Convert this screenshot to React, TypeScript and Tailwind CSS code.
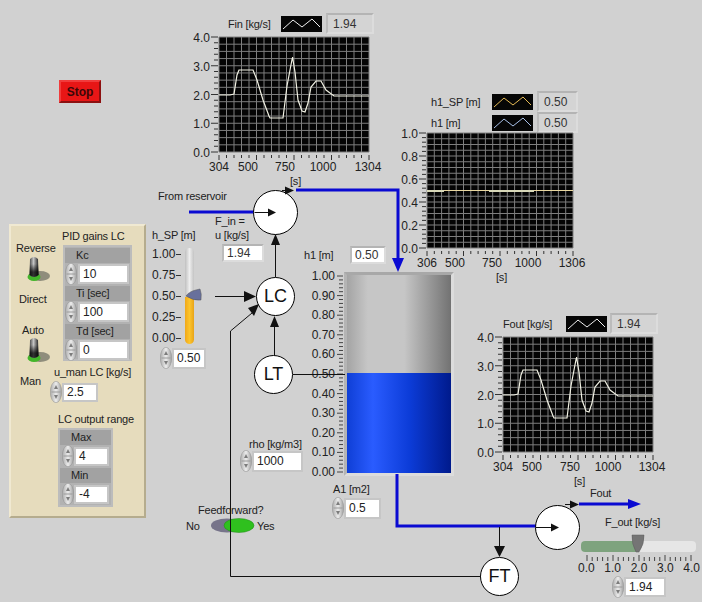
import type { ReactNode } from "react";

const FONT = "'Liberation Sans', Arial, sans-serif";

const CURVE =
  "0,58 11,58 15,57 18,38 20,33 34,33 38,43 44,63 50,79 51,81 64,81 68,49 71,33 73.5,20 76,35 79,63 83,74 86,75 89,66 92,50 97,44 102,44 107,53 115,59 150,59";

type Tick = [string, number];

function Plot({
  width,
  height,
  hCount,
  minorY,
  yLabels,
  xLabels,
  className,
  children,
}: {
  width: number;
  height: number;
  hCount: number;
  minorY: number;
  yLabels: Tick[];
  xLabels: Tick[];
  className: string;
  children: ReactNode;
}) {
  // 28px of axis room on the left, labels may spill over the top edge
  const vLines = Array.from({ length: 21 }, (_, i) => (i * width) / 20);
  const hLines = Array.from({ length: hCount + 1 }, (_, i) => (i * height) / hCount);
  const yTicks = Array.from({ length: minorY + 1 }, (_, i) => (i * height) / minorY);
  return (
    <svg className={`overflow-visible ${className}`} width={width + 50} height={height + 22}>
      <g transform="translate(28,0)">
        <rect width={width} height={height} fill="#040404" />
        {vLines.map((x) => (
          <line key={x} x1={x} x2={x} y1={0} y2={height} stroke="#7e7e7e" />
        ))}
        {hLines.map((y) => (
          <line key={y} x1={0} x2={width} y1={y} y2={y} stroke="#7e7e7e" />
        ))}
        {children}
        {yTicks.map((y, i) => (
          <line key={y} x1={i % 5 === 0 ? -8 : -5} x2={-1} y1={y} y2={y} stroke="#333" />
        ))}
        {vLines.map((x, i) => (
          <line key={x} x1={x} x2={x} y1={height + 3} y2={height + (i % 5 === 0 ? 8 : 6)} stroke="#333" />
        ))}
        {yLabels.map(([t, y]) => (
          <text key={t} x={-9} y={y + 5} textAnchor="end" fontSize="12" fill="#222">
            {t}
          </text>
        ))}
        {xLabels.map(([t, x]) => (
          <text key={t} x={x} y={height + 19} textAnchor="middle" fontSize="12" fill="#222">
            {t}
          </text>
        ))}
      </g>
    </svg>
  );
}

function Legend({ color }: { color: string }) {
  return (
    <svg className="shrink-0" width="41" height="16">
      <rect width="41" height="16" fill="#060606" />
      <polyline points="2,13 12,4 21,11 31,3 39,11" fill="none" stroke={color} />
    </svg>
  );
}

function Readout({ className, value, white }: { className: string; value: string; white?: boolean }) {
  return (
    <div
      className={`${className} flex items-center border-2 border-t-[#b4b4b4] border-l-[#bcbcbc] border-r-[#dcdcdc] border-b-[#dcdcdc] text-[12px] text-[#333] ${
        white ? "bg-white pl-[3px]" : "bg-[#d4d4d4] pl-[5px]"
      }`}
    >
      {value}
    </div>
  );
}

function Label({ className = "", children }: { className?: string; children: ReactNode }) {
  return <div className={`whitespace-nowrap text-[11px] leading-[14px] tracking-[-0.2px] text-[#222] ${className}`}>{children}</div>;
}

function Spinner() {
  return (
    <svg className="shrink-0" width="12" height="22" viewBox="0 0 12 22">
      <defs>
        <linearGradient id="spin" x1="0" x2="1" y1="0" y2="0">
          <stop offset="0" stopColor="#acacac" />
          <stop offset="0.5" stopColor="#ececec" />
          <stop offset="1" stopColor="#a0a0a0" />
        </linearGradient>
      </defs>
      <ellipse cx="6" cy="11" rx="5.7" ry="10.7" fill="url(#spin)" stroke="#8e8e8e" strokeWidth="0.5" />
      <line x1="1.5" x2="10.5" y1="11" y2="11" stroke="#9a9a9a" />
      <path d="M6 4 L4 8 L8 8 Z M6 18 L4 14 L8 14 Z" fill="#7c7c7c" />
    </svg>
  );
}

function NumControl({ className = "", fieldClass, value }: { className?: string; fieldClass: string; value: string }) {
  return (
    <div className={`flex items-center gap-[2px] ${className}`}>
      <Spinner />
      <div className={`${fieldClass} flex items-center bg-white pl-[3px] text-[12px] text-[#222] outline outline-2 outline-[#c6c6c6]`}>
        {value}
      </div>
    </div>
  );
}

function ClusterRow({ label, pad, fieldClass, value }: { label: string; pad: string; fieldClass: string; value: string }) {
  return (
    <div className="flex flex-col">
      <Label className="h-[15px] bg-[#a2a2a2] pl-[11px]">{label}</Label>
      <NumControl className={pad} fieldClass={fieldClass} value={value} />
    </div>
  );
}

function Toggle({ className }: { className: string }) {
  return (
    <svg className={className} width="24" height="28" viewBox="0 0 24 28">
      <defs>
        <linearGradient id="lever" x1="0" x2="1" y1="0" y2="0">
          <stop offset="0" stopColor="#444" />
          <stop offset="0.45" stopColor="#c4c4c4" />
          <stop offset="1" stopColor="#222" />
        </linearGradient>
        <linearGradient id="leverShade" x1="0" x2="0" y1="0" y2="1">
          <stop offset="0.35" stopColor="#000" stopOpacity="0" />
          <stop offset="0.75" stopColor="#000" stopOpacity="0.75" />
        </linearGradient>
      </defs>
      <ellipse cx="14" cy="21" rx="10" ry="5" fill="#8f8d7c" />
      <ellipse cx="8" cy="22" rx="6.5" ry="4" fill="#43b52a" />
      <path d="M4 4 Q8 0 12 4 L12.5 20 Q8 24 3.5 20 Z" fill="url(#lever)" />
      <path d="M4 4 Q8 0 12 4 L12.5 20 Q8 24 3.5 20 Z" fill="url(#leverShade)" />
    </svg>
  );
}

function Node({ className, label }: { className: string; label?: string }) {
  return (
    <div className={`absolute ${className} flex items-center justify-center rounded-full border border-black bg-white text-[18px] text-[#111]`}>
      {label}
    </div>
  );
}

const FLOW_Y: Tick[] = [["4.0", 0], ["3.0", 29], ["2.0", 58], ["1.0", 86], ["0.0", 115]];

export default function App() {
  return (
    <div className="relative h-[602px] w-[702px] overflow-hidden bg-[#d1d1d1]" style={{ fontFamily: FONT }}>
      <button className="absolute left-[59px] top-[80px] h-[23px] w-[42px] border-2 border-t-[#f03c3c] border-l-[#f03c3c] border-r-[#8c1010] border-b-[#8c1010] bg-[#e81616] text-[12px] font-bold leading-none text-[#3c0808]">
        Stop
      </button>

      {/* Fin chart */}
      <div className="absolute left-[191px] top-[13px] flex flex-col">
        <div className="flex h-[21px] items-center pl-[37px]">
          <Label className="w-[53px]">Fin [kg/s]</Label>
          <Legend color="#f0f0f0" />
          <Readout className="ml-[4px] h-[21px] w-[48px]" value="1.94" />
        </div>
        <Plot
          className="mt-[3px]"
          width={150}
          height={115}
          hCount={16}
          minorY={20}
          yLabels={FLOW_Y}
          xLabels={[["304", 0], ["500", 29], ["750", 66], ["1000", 104], ["1304", 149]]}
        >
          <polyline points={CURVE} fill="none" stroke="#f2f2e4" strokeWidth="1.2" />
        </Plot>
        <Label className="pl-[99px]">[s]</Label>
      </div>

      {/* h1 chart */}
      <div className="absolute left-[399px] top-[91px] flex flex-col">
        <div className="flex h-[21px] items-center pl-[32px]">
          <Label className="w-[61px]">h1_SP [m]</Label>
          <Legend color="#e6bb55" />
          <Readout className="ml-[4px] h-[21px] w-[41px]" value="0.50" />
        </div>
        <div className="flex h-[21px] items-center pl-[32px]">
          <Label className="w-[61px]">h1 [m]</Label>
          <Legend color="#a8c0e8" />
          <Readout className="ml-[4px] h-[21px] w-[41px]" value="0.50" />
        </div>
        <Plot
          className=""
          width={146}
          height={115}
          hCount={20}
          minorY={25}
          yLabels={[["1.0", 0], ["0.8", 23], ["0.6", 46], ["0.4", 69], ["0.2", 92], ["0.0", 115]]}
          xLabels={[["306", 0], ["500", 28], ["750", 65], ["1000", 101], ["1306", 145]]}
        >
          <line x1="0" x2="146" y1="57.5" y2="57.5" stroke="#e9d7a0" strokeWidth="1.2" />
          <line x1="0" x2="17" y1="58" y2="58" stroke="#d8d8b8" strokeWidth="2" />
          <line x1="62" x2="107" y1="58" y2="58" stroke="#d8d8b8" strokeWidth="2" />
        </Plot>
        <Label className="pl-[97px]">[s]</Label>
      </div>

      {/* Fout chart */}
      <div className="absolute left-[475px] top-[313px] flex flex-col">
        <div className="flex h-[21px] items-center pl-[28px]">
          <Label className="w-[63px]">Fout [kg/s]</Label>
          <Legend color="#f0f0f0" />
          <Readout className="ml-[3px] h-[21px] w-[48px]" value="1.94" />
        </div>
        <Plot
          className="mt-[3px]"
          width={150}
          height={115}
          hCount={16}
          minorY={20}
          yLabels={FLOW_Y}
          xLabels={[["304", 0], ["500", 29], ["750", 67], ["1000", 105], ["1304", 149]]}
        >
          <polyline points={CURVE} fill="none" stroke="#f2f2e4" strokeWidth="1.2" />
        </Plot>
        <Label className="pl-[99px]">[s]</Label>
      </div>

      <Label className="absolute left-[158px] top-[189px]">From reservoir</Label>

      <div className="absolute left-[215px] top-[214px] flex flex-col">
        <Label>F_in =</Label>
        <Label>u [kg/s]</Label>
        <Readout className="ml-[7px] mt-[2px] h-[18px] w-[42px]" value="1.94" white />
      </div>

      {/* PID panel */}
      <div className="absolute left-[9px] top-[224px] flex h-[294px] w-[137px] border-2 border-t-[#f0e9d2] border-l-[#f0e9d2] border-r-[#b5ac8e] border-b-[#b5ac8e] bg-[#e6dcbd]">
        <div className="flex w-[39px] flex-col pt-[15px]">
          <Label className="pl-[5px]">Reverse</Label>
          <Toggle className="ml-[15px]" />
          <Label className="mt-[9px] pl-[8px]">Direct</Label>
          <Label className="mt-[17px] pl-[11px]">Auto</Label>
          <Toggle className="ml-[15px] -mt-[1px]" />
          <Label className="mt-[10px] pl-[9px]">Man</Label>
        </div>
        <div className="flex flex-col pt-[3px]">
          <Label className="pl-[12px]">PID gains LC</Label>
          <div className="ml-[13px] mt-[2px] flex h-[116px] w-[69px] flex-col gap-[1px] border-2 border-[#bcbcbc] bg-[#b2b2b2] pt-[1px]">
            <ClusterRow label="Kc" pad="" fieldClass="ml-[1px] h-[16px] w-[47px]" value="10" />
            <ClusterRow label="Ti [sec]" pad="" fieldClass="ml-[1px] h-[16px] w-[47px]" value="100" />
            <ClusterRow label="Td [sec]" pad="" fieldClass="ml-[1px] h-[16px] w-[47px]" value="0" />
          </div>
          <Label className="mt-[4px] pl-[4px]">u_man LC [kg/s]</Label>
          <NumControl className="mt-[2px]" fieldClass="h-[15px] w-[32px]" value="2.5" />
          <Label className="mt-[9px] pl-[8px]">LC output range</Label>
          <div className="ml-[8px] mt-[2px] flex h-[79px] w-[55px] flex-col gap-[1px] border-2 border-[#bcbcbc] bg-[#b2b2b2]">
            <ClusterRow label="Max" pad="pl-[2px]" fieldClass="h-[15px] w-[31px]" value="4" />
            <ClusterRow label="Min" pad="pl-[2px]" fieldClass="h-[15px] w-[31px]" value="-4" />
          </div>
        </div>
      </div>

      {/* h_SP slide */}
      <div className="absolute left-[152px] top-[228px] flex flex-col">
        <Label>h_SP [m]</Label>
        <div className="mt-[5px] flex h-[98px]">
          <div className="flex w-[33px] flex-col justify-between text-[12px] leading-[14px] text-[#222]">
            {["1.00", "0.75", "0.50", "0.25", "0.00"].map((t) => (
              <div key={t} className="flex items-center gap-[1px]">
                <span>{t}</span>
                <span className="h-px w-[5px] bg-[#333]" />
              </div>
            ))}
          </div>
          <div className="relative mt-[1px] h-[96px] w-[9px]">
            <div className="flex h-full flex-col justify-end overflow-hidden rounded-full bg-gradient-to-r from-[#c0c0c0] via-[#eeeeee] to-[#c4c4c4]">
              <div className="h-[47px] bg-gradient-to-r from-[#f0a818] via-[#fcc42c] to-[#e8a418]" />
            </div>
            <svg className="absolute left-0 top-[40px]" width="18" height="14" viewBox="0 0 18 14">
              <path d="M1 8 Q4 3 15 1 Q17 6 16 12 Q8 13 1 8 Z" fill="#68709c" stroke="#555" strokeWidth="0.5" />
            </svg>
          </div>
        </div>
        <NumControl className="ml-[8px] mt-[2px]" fieldClass="h-[17px] w-[30px]" value="0.50" />
      </div>

      {/* tank */}
      <div className="absolute left-[304px] top-[246px] flex flex-col">
        <div className="flex h-[18px] items-center">
          <Label className="w-[46px]">h1 [m]</Label>
          <Readout className="h-[18px] w-[36px]" value="0.50" white />
        </div>
        <div className="mt-[8px] flex pl-[6px]">
          <div className="-mt-[3px] flex h-[210px] w-[27px] flex-col justify-between pr-[2px] text-right text-[12px] leading-[14px] text-[#222]">
            {["1.00", "0.90", "0.80", "0.70", "0.60", "0.50", "0.40", "0.30", "0.20", "0.10", "0.00"].map((t) => (
              <span key={t}>{t}</span>
            ))}
          </div>
          <svg className="mt-[2px]" width="6" height="200">
            {Array.from({ length: 51 }, (_, i) => (
              <line key={i} x1={i % 5 === 0 ? 0 : 2} x2="6" y1={2 + i * 3.92} y2={2 + i * 3.92} stroke="#444" />
            ))}
          </svg>
          <div className="ml-[1px] flex h-[204px] w-[110px] flex-col border-[3px] border-t-[#a8a8a8] border-l-[#b4b4b4] border-r-[#dcdcdc] border-b-[#dcdcdc]">
            <div className="h-[98px] bg-[linear-gradient(90deg,#a4a4a4,#c6c6c6_20%,#c6c6c6_55%,#727272)]" />
            <div className="flex-1 bg-[linear-gradient(90deg,#0f3fd6,#2a5cff_25%,#0c3cd8_60%,#001a8c)]" />
          </div>
        </div>
      </div>

      <div className="absolute left-[240px] top-[437px] flex flex-col">
        <Label className="pl-[9px]">rho [kg/m3]</Label>
        <NumControl className="-mt-[1px]" fieldClass="h-[17px] w-[47px]" value="1000" />
      </div>
      <div className="absolute left-[332px] top-[482px] flex flex-col">
        <Label className="pl-[1px]">A1 [m2]</Label>
        <NumControl className="mt-[1px]" fieldClass="h-[17px] w-[33px]" value="0.5" />
      </div>

      {/* Feedforward switch */}
      <div className="absolute left-[186px] top-[503px] flex flex-col">
        <Label className="pl-[12px]">Feedforward?</Label>
        <div className="flex items-center">
          <Label className="w-[24px]">No</Label>
          <svg width="46" height="17" viewBox="0 0 46 17">
            <ellipse cx="17" cy="8.5" rx="16" ry="7" fill="#77748a" />
            <ellipse cx="29" cy="8.5" rx="15" ry="7" fill="#2fc01e" stroke="#1f8a14" strokeWidth="0.5" />
          </svg>
          <Label className="ml-[1px]">Yes</Label>
        </div>
      </div>

      {/* F_out slide */}
      <div className="absolute left-[578px] top-[515px] flex flex-col">
        <Label className="pl-[27px]">F_out [kg/s]</Label>
        <div className="relative ml-[3px] mt-[12px] h-[11px] w-[115px]">
          <div className="flex h-full overflow-hidden rounded-[4px] bg-[#e6e6e6]">
            <div className="w-[56px] bg-[#7ea37e]" />
          </div>
          <svg className="absolute left-[50px] top-[-7px]" width="14" height="19" viewBox="0 0 14 19">
            <path d="M1 1 L13 1 Q13.5 10 8 18 L5 18 Q0.5 10 1 1 Z" fill="#757575" stroke="#5c5c5c" strokeWidth="0.5" />
          </svg>
        </div>
        <svg className="ml-[7px] mt-[3px]" width="110" height="7">
          {Array.from({ length: 21 }, (_, i) => (
            <line key={i} x1={2 + i * 5.2} x2={2 + i * 5.2} y1={i % 5 === 0 ? 0 : 2} y2="6" stroke="#444" />
          ))}
        </svg>
        <div className="-mt-[1px] flex w-[122px] justify-between text-[12px] leading-[14px] text-[#222]">
          {["0.0", "1.0", "2.0", "3.0", "4.0"].map((t) => (
            <span key={t}>{t}</span>
          ))}
        </div>
        <NumControl className="ml-[34px] mt-[1px]" fieldClass="h-[16px] w-[38px]" value="1.94" />
      </div>
      <Label className="absolute left-[590px] top-[486px]">Fout</Label>

      {/* pipes go under the round nodes */}
      <svg className="pointer-events-none absolute left-0 top-0" width="702" height="602">
        <g fill="none" stroke="#0a0ad2" strokeWidth="3">
          <path d="M189 212 H254" />
          <path d="M296 190 H398 V262" />
          <path d="M397 474 V526 H536" />
          <path d="M579 504 H632" />
        </g>
        <path d="M392 258 H404 L398 272 Z M628 499 L641 504 L628 509 Z" fill="#0a0ad2" />
      </svg>

      <Node className="left-[253px] top-[190px] h-[45px] w-[45px]" />
      <Node className="left-[535px] top-[505px] h-[45px] w-[45px]" />
      <Node className="left-[256px] top-[277px] h-[39px] w-[39px]" label="LC" />
      <Node className="left-[254px] top-[355px] h-[39px] w-[39px]" label="LT" />
      <Node className="left-[480px] top-[557px] h-[39px] w-[39px]" label="FT" />

      {/* signal wires: these cross "0.50" and "Feedforward?" in the picture too */}
      <svg className="pointer-events-none absolute left-0 top-0" width="702" height="602">
        <g fill="none" stroke="#111" strokeWidth="1">
          <path d="M254.5 212.5 H272" />
          <path d="M282 190.5 H288" />
          <path d="M536 527.5 H554" />
          <path d="M565 504.5 H572" />
          <path d="M275.5 277 V240" />
          <path d="M274.5 355 V320" />
          <path d="M215 296.5 H246" />
          <path d="M293 374.5 H345" />
          <path d="M230.5 576.5 V331 L252 313" />
          <path d="M230.5 576.5 H481" />
          <path d="M499.5 527 V548" />
        </g>
        <path
          d="M268 208.5 L276 212.5 L268 216.5 Z M285 186.5 L294 190.5 L285 194.5 Z M551 523.5 L559 527.5 L551 531.5 Z M570 500.5 L579 504.5 L570 508.5 Z M271 245 L275.5 234 L280 245 Z M270 327 L274.5 316 L279 327 Z M244 291 L256 296.5 L244 302 Z M248 308 L259 304 L254 316 Z M494 546 L505 546 L499.5 557 Z"
          fill="#111"
        />
      </svg>
    </div>
  );
}
